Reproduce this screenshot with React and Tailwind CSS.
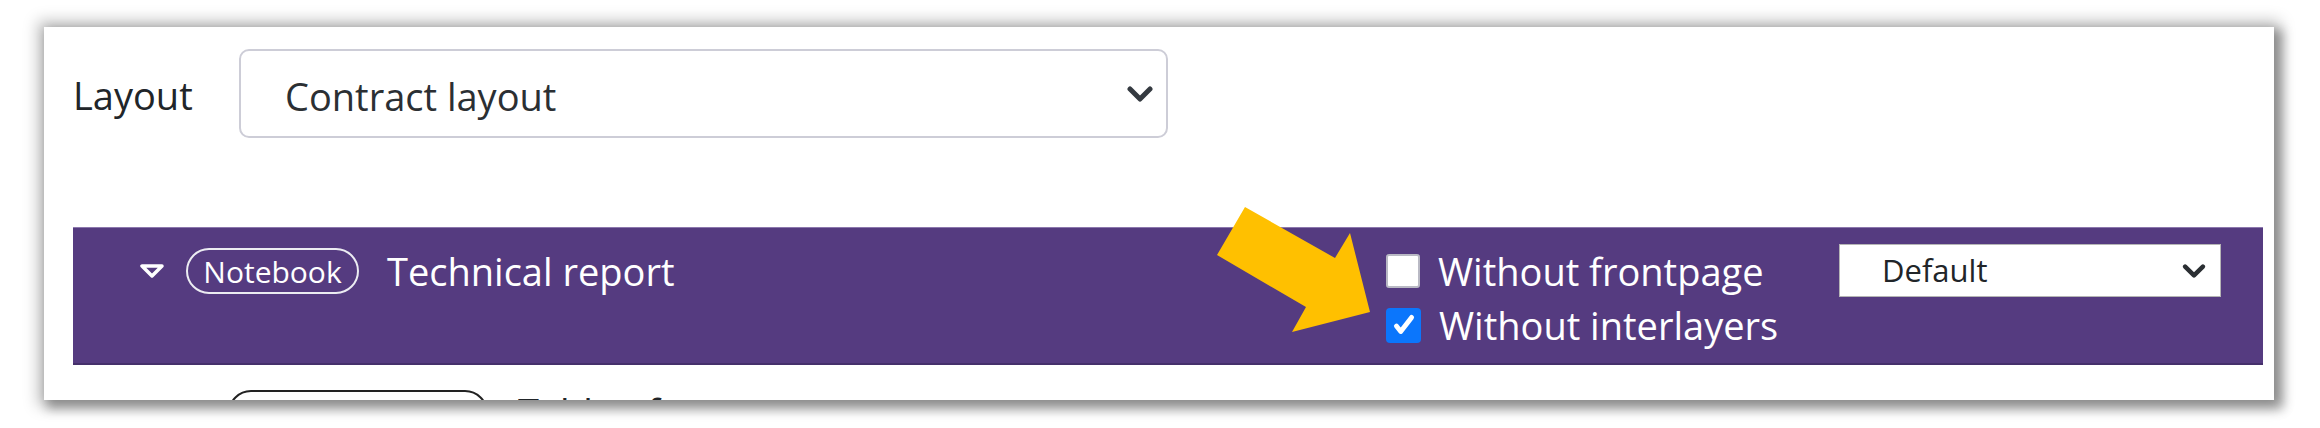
import React from 'react';

const Chevron = ({ className }) => (
  <svg className={className} viewBox="0 0 26 18" fill="none" stroke="currentColor" strokeWidth={5} strokeLinecap="round" strokeLinejoin="round">
    <path d="M3 4l10 10 10-10" />
  </svg>
);

const Checkbox = ({ checked }) =>
  checked ? (
    <span className="flex h-[35px] w-[35px] shrink-0 items-center justify-center rounded-[4px] bg-[#0b76fc]">
      <svg viewBox="0 0 24 24" className="h-[26px] w-[26px]" fill="none" stroke="white" strokeWidth={4.5} strokeLinecap="round" strokeLinejoin="round">
        <path d="M5 13l4 5L19 5" />
      </svg>
    </span>
  ) : (
    <span className="h-[34px] w-[34px] shrink-0 rounded-[3px] border-2 border-[#b9b9c4] bg-white" />
  );

const OptionRow = ({ checked, label }) => (
  <label className="flex h-[54px] items-center gap-[18px] text-[38px] text-white">
    <Checkbox checked={checked} />
    <span>{label}</span>
  </label>
);

export default function App() {
  return (
    <div className="h-[428px] w-[2320px] overflow-hidden bg-white pl-[44px] pt-[27px] font-['Open_Sans',sans-serif]">
      <div className="relative h-[373px] w-[2230px] overflow-hidden bg-white pl-[29px] pr-[11px] pt-[22px] shadow-[0_0_14px_6px_rgba(0,0,0,0.25),6px_6px_10px_3px_rgba(0,0,0,0.3)]">
        {/* layout picker */}
        <div className="flex items-center">
          <span className="mt-[3px] w-[166px] text-[38px] text-[#212529]">Layout</span>
          <div className="flex h-[89px] w-[929px] items-center justify-between rounded-[10px] border-2 border-[#cdcdd7] bg-white pl-[44px] pr-[13px]">
            <span className="mt-[5px] text-[38px] text-[#2b2f33]">Contract layout</span>
            <Chevron className="h-[18px] w-[26px] text-[#343a40]" />
          </div>
        </div>

        {/* notebook header */}
        <div className="mt-[89px] flex h-[138px] items-start border-t border-b-2 border-t-[#8c78ad] border-b-[#45306b] bg-[#553b80] pl-[66px] pr-[42px] pt-[16px]">
          <div className="flex h-[54px] flex-1 items-center">
            <svg viewBox="0 0 26 14" className="h-[14px] w-[26px]" fill="none" stroke="white" strokeWidth={3.5} strokeLinejoin="round">
              <polygon points="3,2 23,2 13,12" />
            </svg>
            <span className="ml-[21px] flex h-[46px] w-[173px] items-center justify-center rounded-full border-2 border-[#ececf2] text-[30px] text-white">
              Notebook
            </span>
            <span className="ml-[28px] text-[38px] text-white">Technical report</span>
          </div>
          <div className="flex w-[453px] flex-col">
            <OptionRow label="Without frontpage" />
            <OptionRow checked label="Without interlayers" />
          </div>
          <div className="flex h-[53px] w-[382px] items-center justify-between border border-[#b5b5b5] bg-white pl-[42px] pr-[14px]">
            <span className="text-[31px] text-[#212529]">Default</span>
            <Chevron className="h-[16px] w-[24px] text-[#2b2f33]" />
          </div>
        </div>

        {/* next child row, cut off by the card */}
        <div className="mt-[19px] flex items-center pl-[155px]">
          <span className="flex h-[46px] w-[260px] items-center rounded-full border-2 border-[#222] pl-[10px] text-[30px] text-[#212529]">
            Text page
          </span>
          <span className="ml-[30px] text-[38px] text-[#212529]">Table of content</span>
        </div>

        {/* callout arrow */}
        <svg className="absolute left-[1166px] top-[173px] h-[140px] w-[170px]" viewBox="0 0 170 140">
          <polygon points="35,7 125,58 140,33 160,112 82,132 96,107 7,55" fill="#ffc000" />
        </svg>
      </div>
    </div>
  );
}
